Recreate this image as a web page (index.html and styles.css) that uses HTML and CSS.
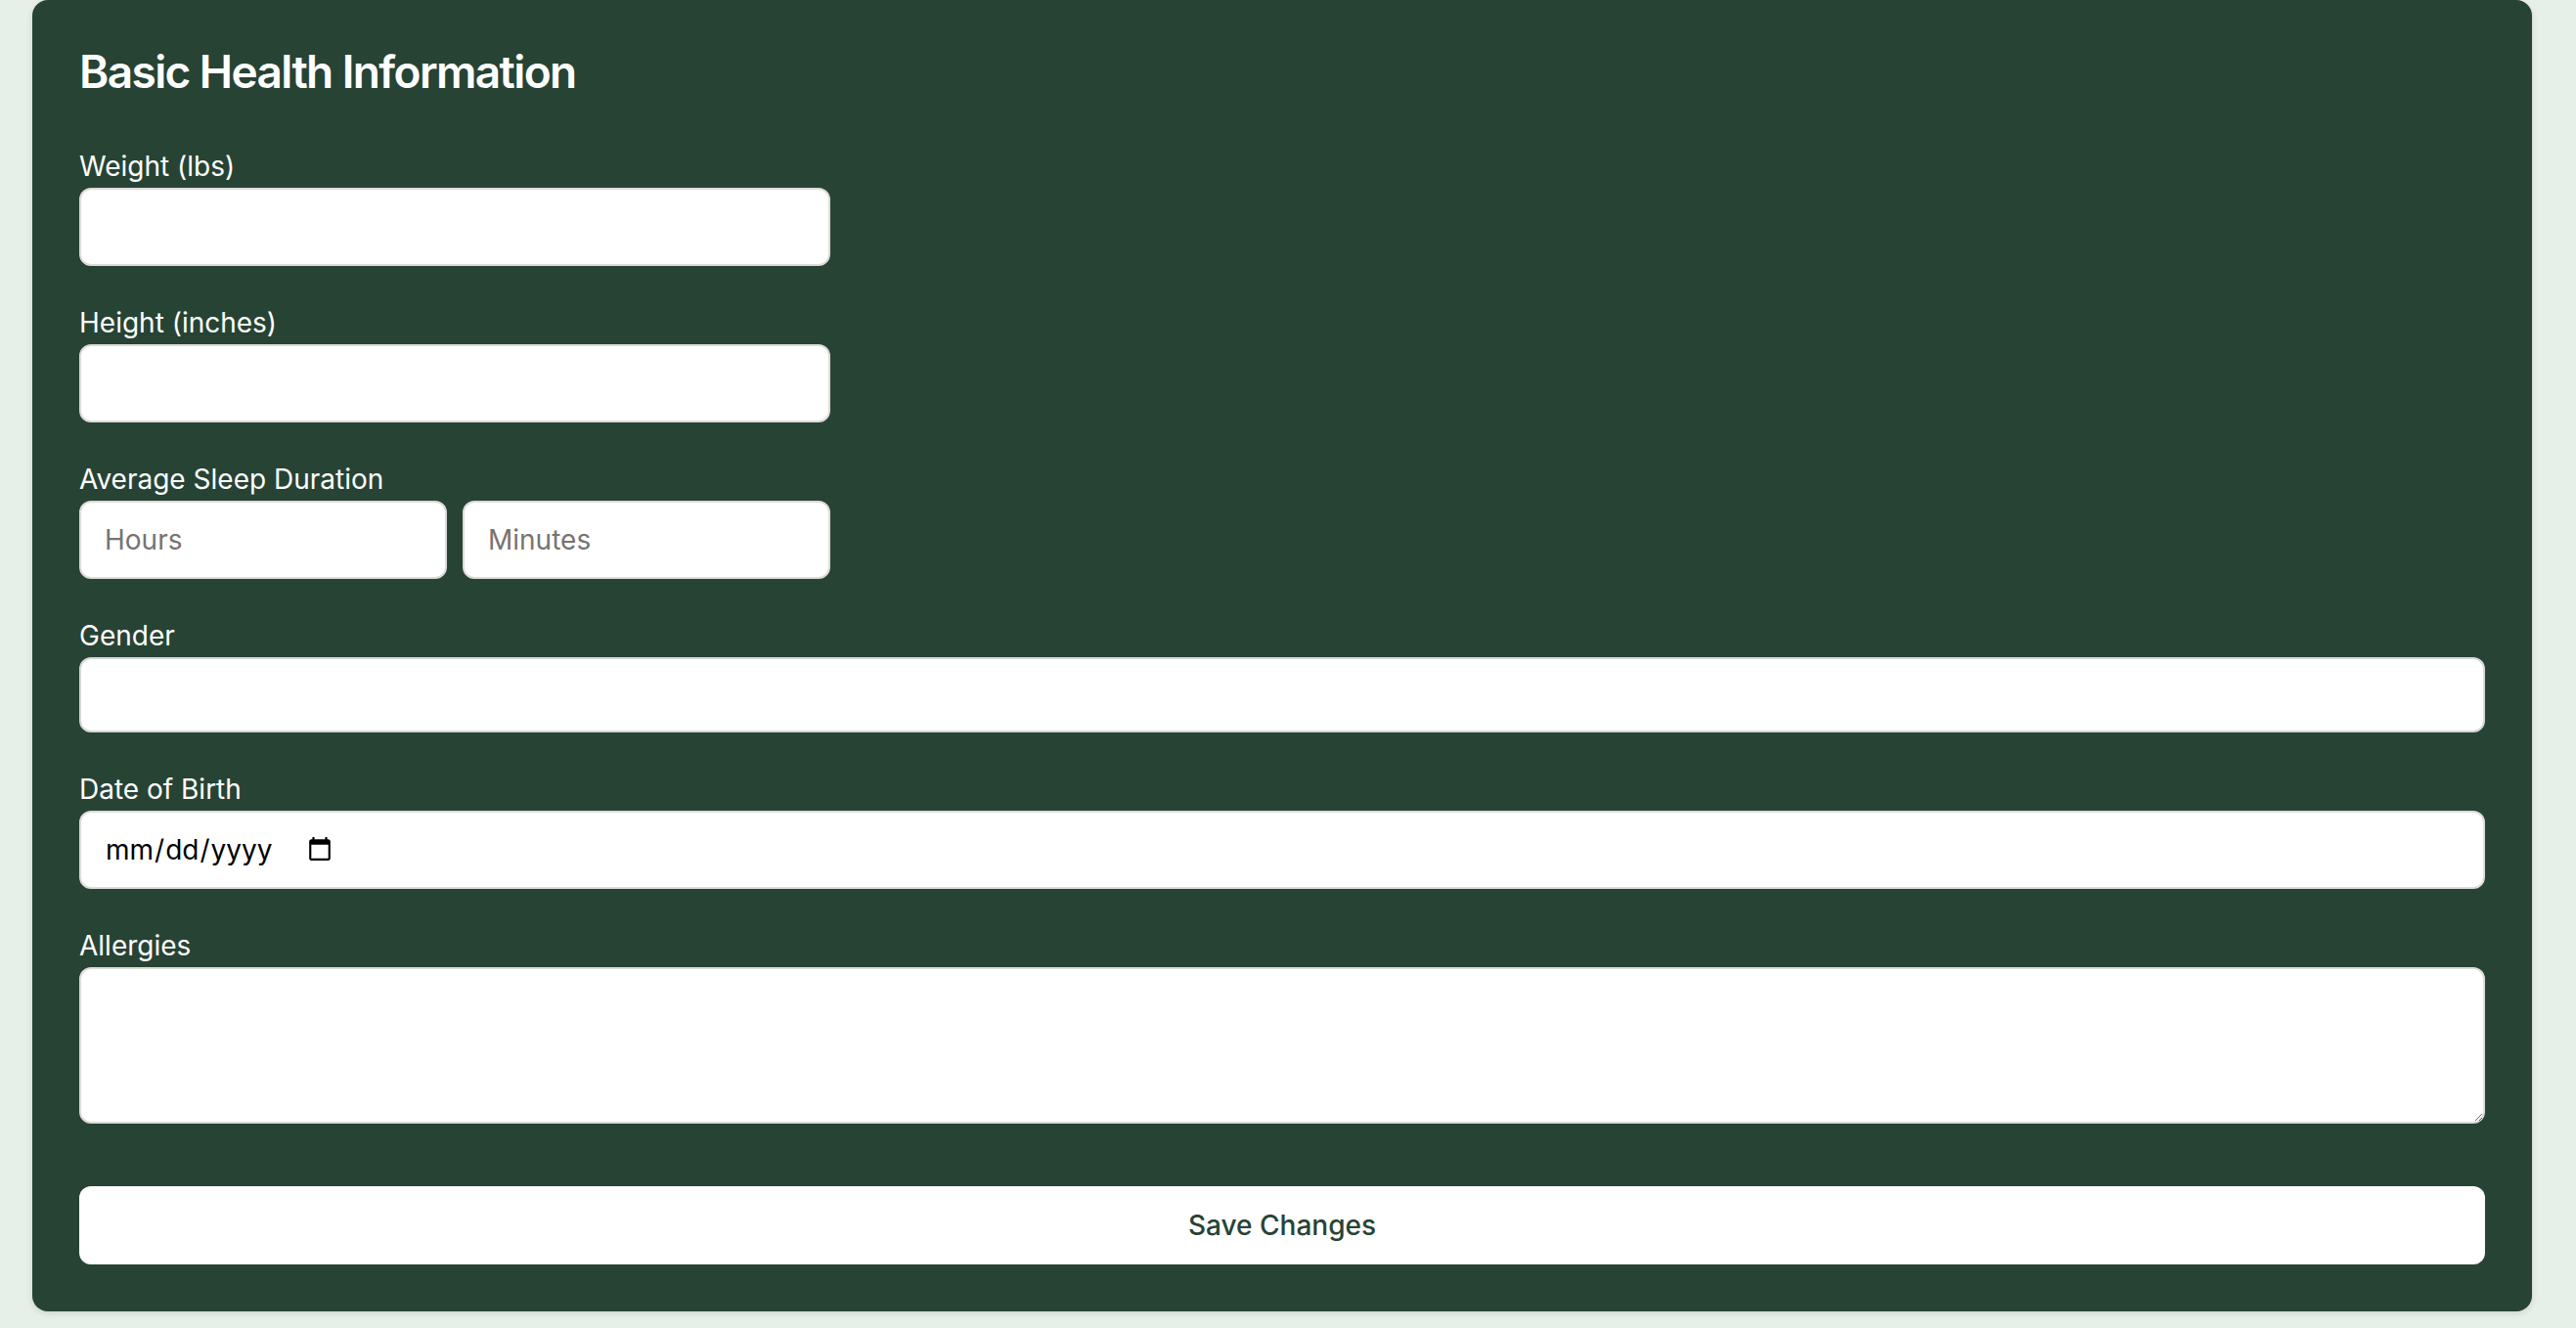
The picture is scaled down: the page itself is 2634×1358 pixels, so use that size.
FILE: index.html
```html
<!DOCTYPE html>
<html lang="en">
<head>
<meta charset="utf-8">
<title>Basic Health Information</title>
<link rel="stylesheet" href="styles.css">
</head>
<body>
<main class="card">
  <h1 class="title">Basic Health Information</h1>
  <form class="form">
    <div class="field">
      <label class="label" for="weight">Weight (lbs)</label>
      <input class="input input-half" id="weight" type="text">
    </div>
    <div class="field">
      <label class="label" for="height">Height (inches)</label>
      <input class="input input-half" id="height" type="text">
    </div>
    <div class="field">
      <label class="label" for="hours">Average Sleep Duration</label>
      <div class="sleep-row">
        <input class="input" id="hours" type="text" placeholder="Hours">
        <input class="input" id="minutes" type="text" placeholder="Minutes">
      </div>
    </div>
    <div class="field">
      <label class="label" for="gender">Gender</label>
      <input class="input input-gender" id="gender" type="text">
    </div>
    <div class="field">
      <label class="label" for="dob">Date of Birth</label>
      <input class="input input-date" id="dob" type="date">
    </div>
    <div class="field field-last">
      <label class="label" for="allergies">Allergies</label>
      <textarea class="input textarea" id="allergies"></textarea>
    </div>
    <button class="save" type="button">Save Changes</button>
  </form>
</main>
</body>
</html>
```
FILE: styles.css
```css
* { box-sizing: border-box; }

html, body {
  margin: 0;
  padding: 0;
}

body {
  background: #e7f0e8;
  font-family: Inter, "Noto Sans", "Liberation Sans", sans-serif;
  padding: 0 45px 16px 33px;
}

.card {
  background: #274334;
  border-radius: 16px;
  padding: 48px 48px 48px;
  box-shadow: 0 2px 6px rgba(0, 0, 0, 0.12);
}

.title {
  margin: 0 0 54px;
  color: #ffffff;
  font-size: 46px;
  line-height: 50px;
  font-weight: 600;
  letter-spacing: -0.035em;
}

.form {
  display: flex;
  flex-direction: column;
}

.field {
  display: flex;
  flex-direction: column;
  margin-bottom: 40px;
}

.field-last {
  margin-bottom: 64px;
}

.label {
  color: #ffffff;
  font-size: 28px;
  line-height: 36px;
  font-weight: 400;
  margin-bottom: 4px;
}

.input {
  display: block;
  width: 100%;
  height: 80px;
  margin: 0;
  padding: 0 24px;
  background: #ffffff;
  border: 2px solid #dedbd9;
  border-radius: 12px;
  font-family: Inter, "Noto Sans", "Liberation Sans", sans-serif;
  font-size: 28px;
  color: #111111;
  outline: none;
}

.input::placeholder {
  color: #787370;
}

.input-half {
  max-width: 768px;
}

.sleep-row {
  display: flex;
  gap: 16px;
  max-width: 768px;
}

.sleep-row .input {
  flex: 1 1 0;
  min-width: 0;
}

.input-gender {
  height: 77px;
  border-color: #d6d6d9;
}

.input-date {
  color: #000000;
  display: flex;
  justify-content: flex-start;
}

.input-date::-webkit-datetime-edit {
  flex: 0 0 auto;
}

.input-date::-webkit-calendar-picker-indicator {
  margin-left: -6px;
}

.textarea {
  height: 160px;
  padding: 16px 24px;
  resize: vertical;
}

.save {
  display: block;
  width: 100%;
  height: 80px;
  margin: 0;
  background: #ffffff;
  border: none;
  border-radius: 12px;
  color: #274334;
  font-family: Inter, "Noto Sans", "Liberation Sans", sans-serif;
  font-size: 28px;
  font-weight: 500;
  cursor: pointer;
}
```
